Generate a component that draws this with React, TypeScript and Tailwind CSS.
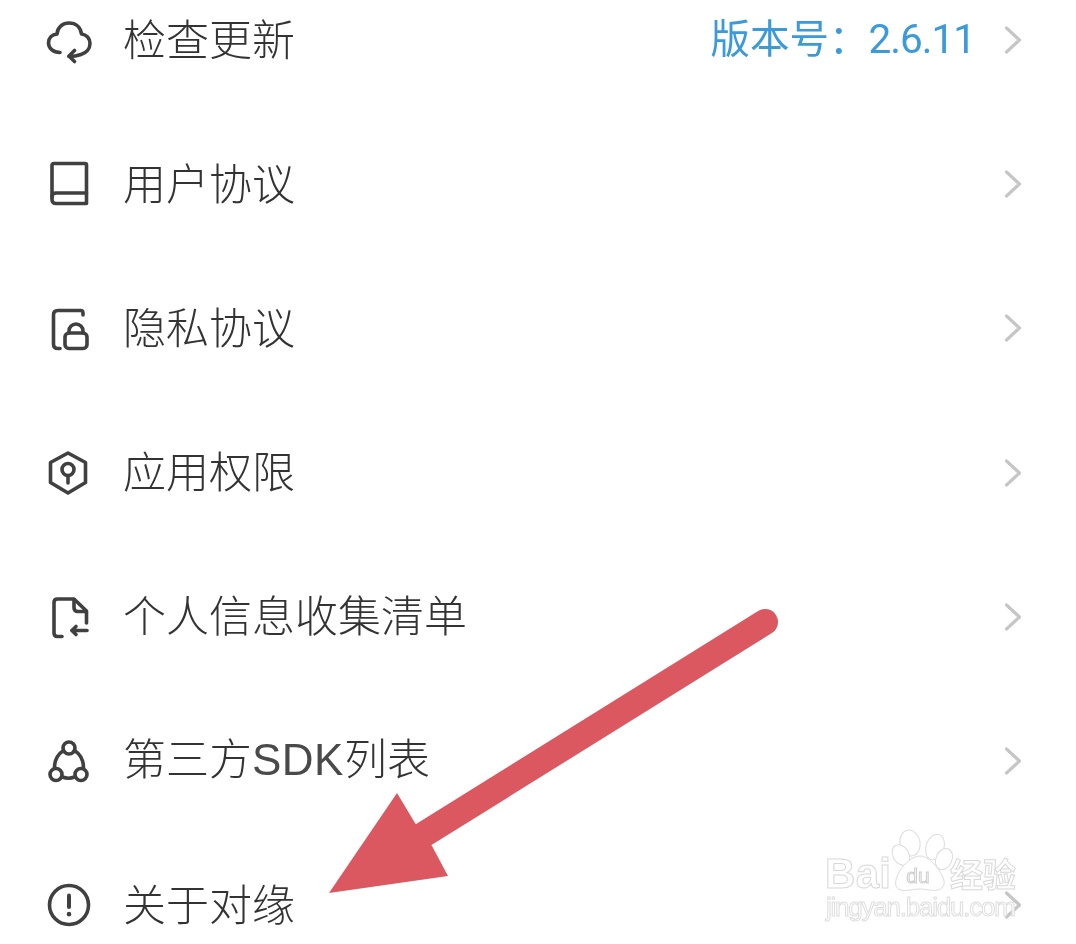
import type { ReactNode } from "react";

const ICON_PROPS = {
  width: 48,
  height: 48,
  viewBox: "0 0 48 48",
  fill: "none",
  stroke: "#404040",
  strokeWidth: 3.6,
  strokeLinecap: "round" as const,
  strokeLinejoin: "round" as const,
  "aria-hidden": true,
};

const icons = {
  cloud: (
    <svg {...ICON_PROPS}>
      <path d="M15 36.500 C8 36.500 3.500 32 3.500 27 C3.500 22 7 18.500 12 18 C12.500 11 18 7 24 7 C30.500 7 35.500 11 36.500 18 C41.500 18.500 45 22.500 45 27.500 C45 33 41 37 36 38.500 C32 40 28 40.500 24 40.500" />
      <path d="M29.500 34.500 L24 40 L29.500 45.500" />
    </svg>
  ),
  book: (
    <svg {...ICON_PROPS}>
      <path d="M9 3.500 H40 Q41.500 3.500 41.500 5 V43.500 H11 Q7 43.500 7 39.500 V5.500 Q7 3.500 9 3.500 Z" />
      <path d="M7 37 Q7 33 11 33 H41.500" />
    </svg>
  ),
  lock: (
    <svg {...ICON_PROPS}>
      <path d="M38 11 V9 Q38 6.500 35.500 6.500 H13 Q8.500 6.500 8.500 11 V40 Q8.500 44.500 13 44.500 H15" />
      <rect x="20" y="29" width="22" height="15.500" rx="4" />
      <path d="M24 29 V27 A7 7 0 0 1 38 27 V29" />
    </svg>
  ),
  shield: (
    <svg {...ICON_PROPS}>
      <path d="M23 4 L40.500 13.500 V33.500 L23 44 L5.500 33.500 V13.500 Z" />
      <circle cx="23" cy="20.500" r="6" />
      <path d="M23 26.500 V34" />
    </svg>
  ),
  file: (
    <svg {...ICON_PROPS}>
      <path d="M17 43.500 H12.500 Q9 43.500 9 40 V9.500 Q9 6 12.500 6 H29 L41.500 18 V30" />
      <path d="M29 6.500 V14.500 Q29 18.500 33 18.500 H41" />
      <path d="M42 37.500 H27" />
      <path d="M31 33.500 L27 37.500 L31 41.500" />
    </svg>
  ),
  nodes: (
    <svg {...ICON_PROPS}>
      <circle cx="24" cy="11" r="6" />
      <circle cx="11" cy="37.500" r="6" />
      <circle cx="36" cy="37.500" r="6" />
      <path d="M18.500 13.500 C13 17 9.500 23 9.500 31" />
      <path d="M29.500 13.500 C35 17 38.500 23 38.500 31" />
      <path d="M17.500 40 C21 41.500 26 41.500 29.500 40" />
    </svg>
  ),
  info: (
    <svg {...ICON_PROPS}>
      <circle cx="24" cy="24" r="19.500" />
      <path d="M24 14.500 V26" strokeWidth="4" />
      <path d="M24 33 V33.200" strokeWidth="4.500" />
    </svg>
  ),
};

function Chevron() {
  return (
    <svg width="18" height="28" viewBox="0 0 18 28" fill="none" stroke="#c6c6c6" strokeWidth="3.200" strokeLinecap="round" strokeLinejoin="round" aria-hidden="true">
      <path d="M2.500 2 L15.500 14 L2.500 26" />
    </svg>
  );
}

function Row({ icon, children, extra }: { icon: ReactNode; children: ReactNode; extra?: ReactNode }) {
  return (
    <div className="flex h-[144.2px] items-center pl-[45px] pr-[54px]">
      {icon}
      <span className="ml-[30px] pb-[6px] text-[43px] leading-none font-light text-[#333333]">{children}</span>
      {extra}
      <span className={extra ? "ml-[29px] flex" : "ml-auto flex"}>
        <Chevron />
      </span>
    </div>
  );
}

export default function App() {
  return (
    <div
      className="relative h-[944px] w-[1076px] overflow-hidden bg-white blur-[0.5px]"
      style={{ fontFamily: '"Noto Sans CJK SC", "Noto Sans", sans-serif' }}
    >
      <div className="-mt-[32px] flex flex-col">
        <Row
          icon={icons.cloud}
          extra={
            <span className="ml-auto pb-[4px] text-[39.5px] leading-none text-[#3b9ad9]">
              版本号：<span className="font-['Roboto'] text-[40.5px] tracking-[-1px]">2.6.11</span>
            </span>
          }
        >
          检查更新
        </Row>
        <Row icon={icons.book}>用户协议</Row>
        <Row icon={icons.lock}>隐私协议</Row>
        <Row icon={icons.shield}>应用权限</Row>
        <Row icon={icons.file}>个人信息收集清单</Row>
        <Row icon={icons.nodes}>
          第三方<span className="font-['Liberation_Sans'] text-[44px] tracking-[0.5px] text-[#4a4a4a]">SDK</span>列表
        </Row>
        <Row icon={icons.info}>关于对缘</Row>
      </div>

      {/* baidu watermark */}
      <svg className="absolute left-[800px] top-[810px]" width="276" height="134" viewBox="0 0 276 134" fill="#ffffff" stroke="#dcdcdc" strokeWidth="1" aria-hidden="true">
        <ellipse cx="110" cy="33" rx="10" ry="13" transform="rotate(-12 110 33)" />
        <ellipse cx="135" cy="37" rx="9" ry="13" transform="rotate(18 135 37)" />
        <ellipse cx="101" cy="45" rx="8" ry="11" transform="rotate(-30 101 45)" />
        <ellipse cx="144" cy="49" rx="8" ry="11" transform="rotate(25 144 49)" />
        <path d="M120 46 C132 46 146 68 144 74 C142 84 128 79 120 79 C110 79 100 84 96 76 C93 66 108 46 120 46 Z" />
        <text x="118" y="73" textAnchor="middle" fontFamily="Liberation Sans" fontSize="21" stroke="#cfcfcf" fill="#f4f4f4">du</text>
        <text x="25" y="78" fontFamily="Liberation Sans" fontWeight="700" fontSize="42" stroke="#d8d8d8" textLength="66">Bai</text>
        <text x="150" y="77" fontFamily="Noto Sans CJK SC" fontWeight="700" fontSize="33" stroke="#d8d8d8">经验</text>
        <text x="26" y="106" fontFamily="Liberation Sans" fontSize="26" stroke="#dedede" textLength="190">jingyan.baidu.com</text>
      </svg>

      {/* red annotation arrow */}
      <svg className="absolute inset-0" width="1076" height="944" viewBox="0 0 1076 944" fill="none" aria-hidden="true">
        <path d="M765 622 L423 835" stroke="#dc5860" strokeWidth="26" strokeLinecap="round" />
        <path d="M329 893 L397 793 L415 823 L432 846 L448 876 Z" fill="#dc5860" />
      </svg>
    </div>
  );
}
